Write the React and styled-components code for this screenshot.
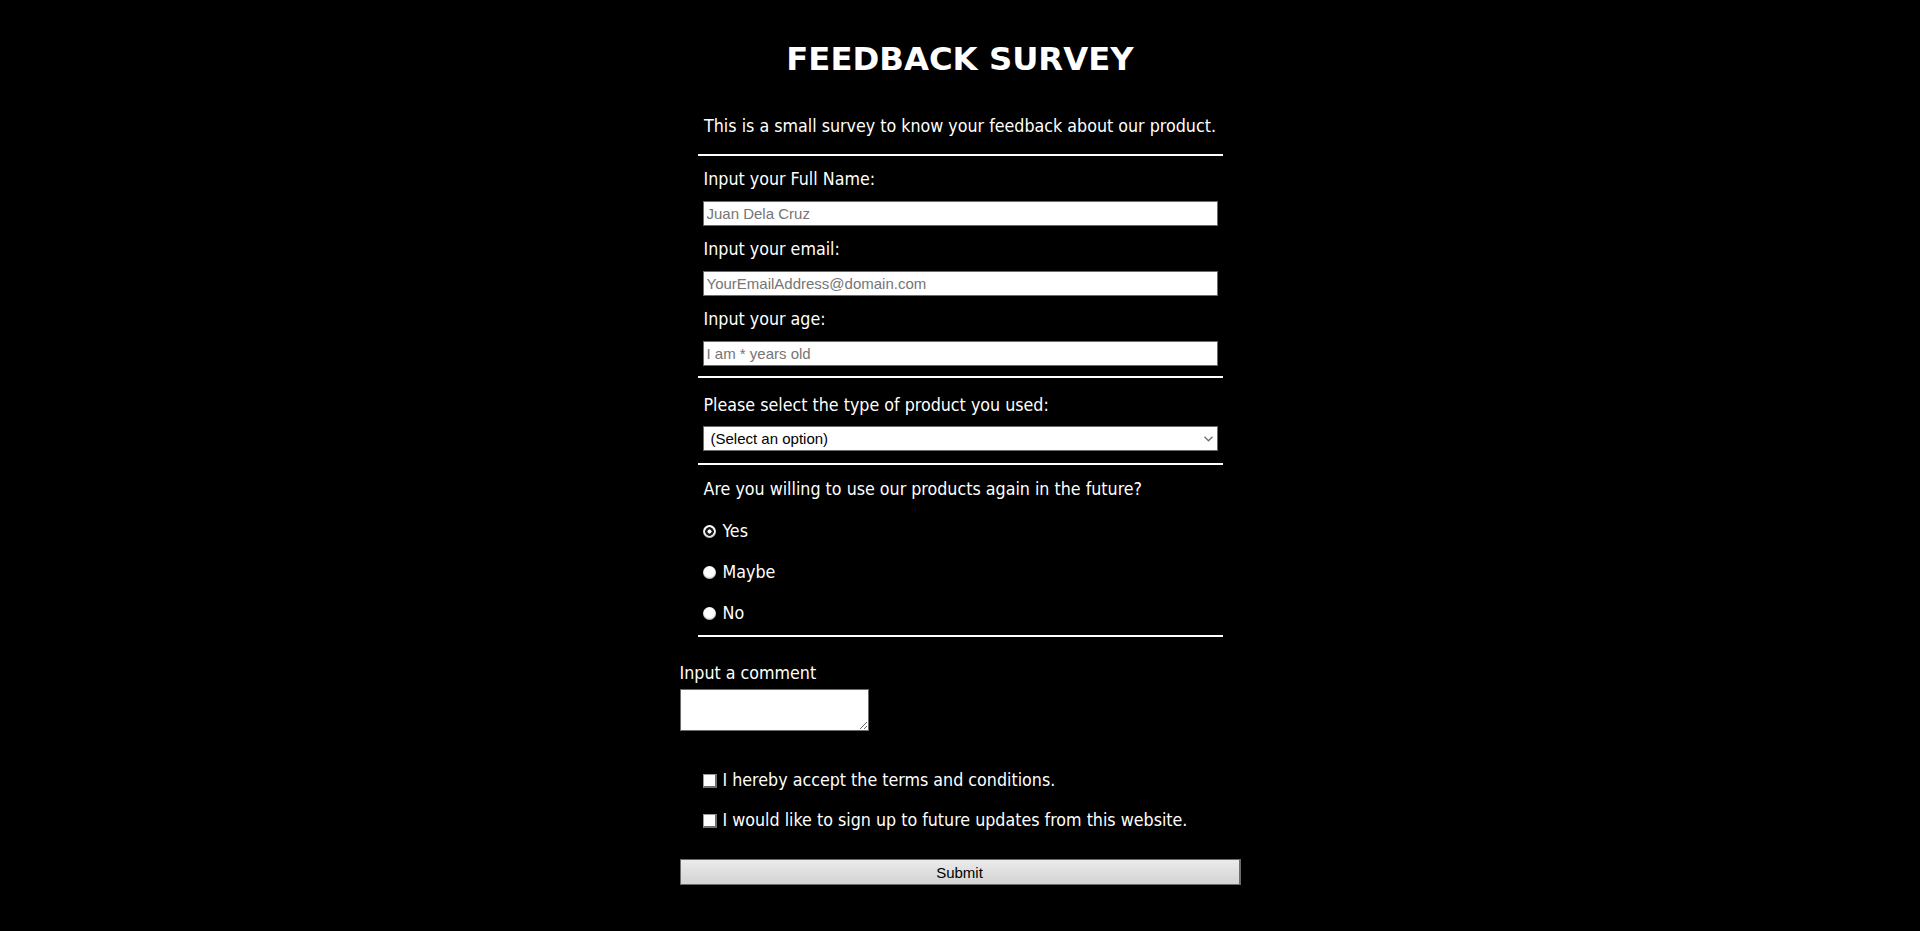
import React from 'react';
import styled, { createGlobalStyle } from 'styled-components';

const GlobalStyle = createGlobalStyle`
  html, body {
    margin: 0;
    padding: 0;
    background: #000;
  }
  body {
    color: #fff;
    font-family: "DejaVu Sans Condensed", "DejaVu Sans", sans-serif;
    font-size: 17.7px;
    line-height: 21px;
  }
`;

function App() {
  return (
    <>
      <GlobalStyle />
      <Page>
        <Title>FEEDBACK SURVEY</Title>
        <Form onSubmit={(e) => e.preventDefault()}>
          <Section $pad="0 5px 17.3px">
            <Intro>This is a small survey to know your feedback about our product.</Intro>
          </Section>

          <Section $pad="12.6px 5px 10px">
            <Fields>
              <Field>
                <Label htmlFor="name">Input your Full Name:</Label>
                <TextInput id="name" type="text" placeholder="Juan Dela Cruz" />
              </Field>
              <Field>
                <Label htmlFor="email">Input your email:</Label>
                <TextInput id="email" type="email" placeholder="YourEmailAddress@domain.com" />
              </Field>
              <Field>
                <Label htmlFor="age">Input your age:</Label>
                <TextInput id="age" type="number" placeholder="I am * years old" />
              </Field>
            </Fields>
          </Section>

          <Section $pad="16.9px 5px 11.6px">
            <Field $gap="10.5px">
              <Label htmlFor="product">Please select the type of product you used:</Label>
              <SelectWrap>
                <Select id="product" defaultValue="">
                  <option value="">(Select an option)</option>
                  <option value="software">Software</option>
                  <option value="hardware">Hardware</option>
                  <option value="service">Service</option>
                </Select>
                <Chevron width="9" height="6" viewBox="0 0 9 6">
                  <path d="M0.5 0.8 L4.5 4.8 L8.5 0.8" fill="none" stroke="#6f6f6f" strokeWidth="1.3" />
                </Chevron>
              </SelectWrap>
            </Field>
          </Section>

          <Section $pad="14.4px 5px 10.7px">
            <Question>Are you willing to use our products again in the future?</Question>
            <Options>
              <Choice>
                <Radio type="radio" name="again" value="yes" defaultChecked />
                Yes
              </Choice>
              <Choice>
                <Radio type="radio" name="again" value="maybe" />
                Maybe
              </Choice>
              <Choice>
                <Radio type="radio" name="again" value="no" />
                No
              </Choice>
            </Options>
          </Section>

          <Comment>
            <Label htmlFor="comment">Input a comment</Label>
            <TextArea id="comment" />
          </Comment>

          <Checks>
            <Choice>
              <Check type="checkbox" />
              I hereby accept the terms and conditions.
            </Choice>
            <Choice>
              <Check type="checkbox" />
              I would like to sign up to future updates from this website.
            </Choice>
          </Checks>

          <Submit type="submit">Submit</Submit>
        </Form>
      </Page>
    </>
  );
}

export default App;

const Page = styled.div`
  display: flex;
  flex-direction: column;
  align-items: center;
  min-height: 931px;
`;
const Title = styled.h1`
  margin: 39.5px 0 0;
  font-family: "DejaVu Sans", sans-serif;
  font-size: 32.3px;
  line-height: 38px;
  font-weight: 700;
  text-align: center;
`;
const Form = styled.form`
  display: flex;
  flex-direction: column;
  width: 561px;
  margin-top: 38.2px;
`;
const Section = styled.div`
  margin: 0 18px;
  padding: ${(p) => p.$pad};
  border-bottom: 2px solid #fff;
`;
const Intro = styled.p`
  margin: 0;
  text-align: center;
`;
const Fields = styled.div`
  display: flex;
  flex-direction: column;
  gap: 12.5px;
`;
const Field = styled.div`
  display: flex;
  flex-direction: column;
  gap: ${(p) => p.$gap || '11.5px'};
`;
const Label = styled.label`
  display: block;
  padding-left: 1px;
`;
const TextInput = styled.input`
  box-sizing: border-box;
  width: 100%;
  height: 25px;
  margin: 0;
  padding: 0 3px;
  border: 1px solid #6b6b6b;
  border-radius: 0;
  background: #fff;
  color: #000;
  font-family: "Liberation Sans", Arial, sans-serif;
  font-size: 15px;
  outline: none;
  appearance: textfield;

  ::placeholder {
    color: #777;
  }
  ::-webkit-inner-spin-button,
  ::-webkit-outer-spin-button {
    -webkit-appearance: none;
    margin: 0;
  }
`;
const SelectWrap = styled.div`
  position: relative;
`;
const Select = styled.select`
  box-sizing: border-box;
  width: 100%;
  height: 25px;
  margin: 0;
  padding: 0 20px 0 7px;
  border: 1px solid #6b6b6b;
  border-radius: 0;
  background: #fff;
  color: #000;
  font-family: "Liberation Sans", Arial, sans-serif;
  font-size: 15px;
  appearance: none;
  outline: none;
`;
const Chevron = styled.svg`
  position: absolute;
  right: 5px;
  top: 10px;
  pointer-events: none;
`;
const Question = styled.div`
  padding-left: 1px;
`;
const Options = styled.div`
  display: flex;
  flex-direction: column;
  gap: 20.3px;
  margin-top: 20.3px;
`;
const Choice = styled.label`
  display: flex;
  align-items: center;
  gap: 7px;
  height: 21px;
`;
const Radio = styled.input`
  appearance: none;
  box-sizing: border-box;
  width: 13px;
  height: 13px;
  margin: 0;
  border-radius: 50%;
  background: #fff;
  box-shadow: inset 0 -1px 1.5px rgba(0, 0, 0, 0.35);

  &:checked {
    background: radial-gradient(circle, #fff 0 1.8px, #1a1a1a 2.3px 4px, #fff 4.6px);
  }
`;
const Comment = styled.div`
  display: flex;
  flex-direction: column;
  align-items: flex-start;
  gap: 5.2px;
  margin-top: 25.5px;

  ${Label} {
    padding-left: 0;
  }
`;
const TextArea = styled.textarea`
  box-sizing: border-box;
  width: 189px;
  height: 42px;
  margin: 0;
  border: 1px solid #6b6b6b;
  border-radius: 0;
  background: #fff;
  outline: none;
`;
const Checks = styled.div`
  display: flex;
  flex-direction: column;
  gap: 19.4px;
  margin-top: 39.3px;
  padding-left: 23px;
`;
const Check = styled.input`
  appearance: none;
  box-sizing: border-box;
  width: 14px;
  height: 14px;
  margin: 0 -1px 0 0;
  border: 1px solid #9a9a9a;
  border-right: 2px solid #6e6e6e;
  border-bottom: 2px solid #6e6e6e;
  border-radius: 0;
  background: #fff;
`;
const Submit = styled.button`
  box-sizing: border-box;
  width: 100%;
  height: 26px;
  margin-top: 27.7px;
  border: 1px solid #6b6b6b;
  border-right-width: 2px;
  border-radius: 0;
  background: linear-gradient(#ebebeb, #d3d3d3);
  color: #000;
  font-family: "Liberation Sans", Arial, sans-serif;
  font-size: 15px;
  cursor: pointer;
`;
